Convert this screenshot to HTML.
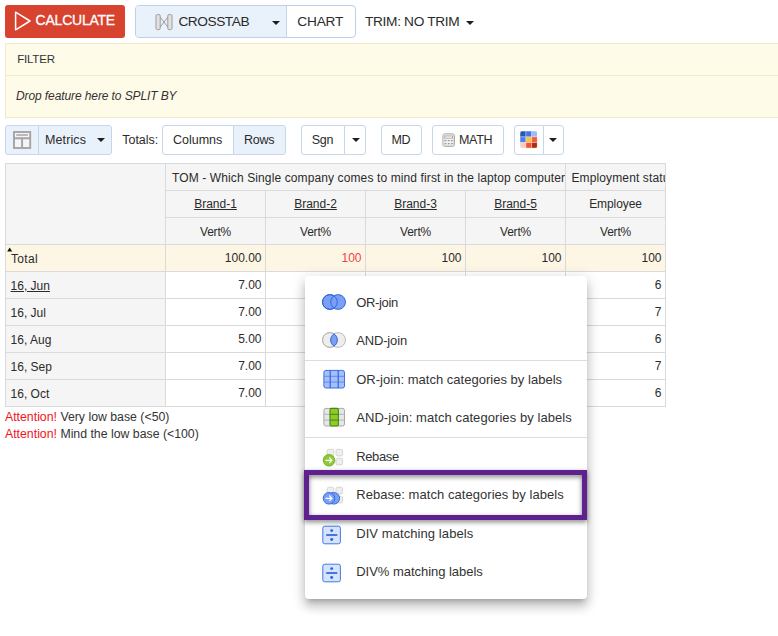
<!DOCTYPE html>
<html>
<head>
<meta charset="utf-8">
<title>Crosstab</title>
<style>
html,body{margin:0;padding:0;}
body{width:778px;height:636px;position:relative;overflow:hidden;background:#fff;font-family:"Liberation Sans",Arial,sans-serif;font-size:13px;color:#2b2b2b;}
.a{position:absolute;box-sizing:border-box;}
.t{position:absolute;white-space:nowrap;}
.caret{position:absolute;width:0;height:0;border-left:4px solid transparent;border-right:4px solid transparent;border-top:4px solid #1e1e1e;}
u{text-decoration:underline;text-underline-offset:1px;}
.tb{position:absolute;box-sizing:border-box;top:125px;height:30px;border:1px solid #c6d7ed;background:#fff;}
.on{background:#e9f1fb;}
.cell{position:absolute;box-sizing:border-box;}
svg{position:absolute;overflow:visible;}
</style>
</head>
<body>
<!-- top bar -->
<div class="a" style="left:5px;top:5px;width:120px;height:32.5px;background:#d7432e;border-radius:3px;"></div>
<svg style="left:0;top:0" width="40" height="40" viewBox="0 0 40 40"><path d="M15.6 12.2 L30 21 L15.6 29.8 Z" fill="none" stroke="#fff" stroke-width="1.5" stroke-linejoin="round"/></svg>
<div class="t" style="left:35.6px;top:10.1px;height:20px;line-height:20px;font-size:14px;letter-spacing:-0.23px;color:#fff;-webkit-text-stroke:0.3px #fff;">CALCULATE</div>
<div class="a" style="left:135px;top:5px;width:220.5px;height:32.5px;border:1px solid #bcd0ea;border-radius:4px;background:#fff;overflow:hidden;"><div class="a" style="left:0;top:0;width:151px;height:31px;background:#e9f1fb;border-right:1px solid #c6d7ed;"></div></div>
<svg style="left:155px;top:13px" width="18" height="18" viewBox="0 0 18 18"><rect x="1" y="1.6" width="4.2" height="15" rx="1.3" fill="#e2e2e2" stroke="#9c9c9c" stroke-width="1"/><rect x="12.8" y="1.6" width="4.2" height="15" rx="1.3" fill="#e2e2e2" stroke="#9c9c9c" stroke-width="1"/><path d="M5.2 4.2 L12.8 14 M12.8 4.2 L5.2 14" stroke="#9c9c9c" stroke-width="1" fill="none"/></svg>
<div class="t" style="left:178.4px;top:12.3px;height:20px;line-height:20px;font-size:13.7px;letter-spacing:-0.45px;">CROSSTAB</div>
<div class="caret" style="left:272px;top:21px"></div>
<div class="t" style="left:297.3px;top:12.3px;height:20px;line-height:20px;font-size:13.7px;letter-spacing:-0.2px;">CHART</div>
<div class="t" style="left:365px;top:12.3px;height:20px;line-height:20px;font-size:13.7px;letter-spacing:-0.33px;">TRIM: NO TRIM</div>
<div class="caret" style="left:466px;top:21px"></div>
<!-- filter panel -->
<div class="a" style="left:5px;top:43px;width:790px;height:75px;background:#fefbe9;border:1px solid #f2ebca;"><div class="a" style="left:0;right:0;top:31px;height:1px;background:#f2ebca;"></div></div>
<div class="t" style="left:17.2px;top:49.4px;height:20px;line-height:20px;font-size:11.5px;letter-spacing:-0.2px;color:#333;">FILTER</div>
<div class="t" style="left:16px;top:86.2px;height:20px;line-height:20px;font-size:12px;letter-spacing:-0.1px;color:#333;font-style:italic;">Drop feature here to SPLIT BY</div>
<!-- toolbar -->
<div class="tb on" style="left:5px;width:34px;border-radius:3px 0 0 3px;"></div>
<div class="tb on" style="left:38px;width:74px;border-radius:0 3px 3px 0;"></div>
<svg style="left:12px;top:130px" width="20" height="20" viewBox="0 0 20 20"><rect x="2" y="2" width="16.2" height="16" fill="#f2f5f9" stroke="#a6a4a1" stroke-width="1.9"/><path d="M2 8.2 H18.2 M10.1 8.2 V18" stroke="#a6a4a1" stroke-width="1.9" fill="none"/><path d="M4.3 5 H15.9" stroke="#a6a4a1" stroke-width="1.5" fill="none"/></svg>
<div class="t" style="left:45px;top:129.6px;height:20px;line-height:20px;font-size:12.5px;letter-spacing:0.1px;">Metrics</div>
<div class="caret" style="left:97px;top:137.7px"></div>
<div class="t" style="left:122.2px;top:129.6px;height:20px;line-height:20px;font-size:12.5px;">Totals:</div>
<div class="tb" style="left:162px;width:72px;border-radius:3px 0 0 3px;"></div>
<div class="tb on" style="left:233px;width:53px;border-radius:0 3px 3px 0;"></div>
<div class="t" style="left:173px;top:129.6px;height:20px;line-height:20px;font-size:12.5px;">Columns</div>
<div class="t" style="left:244px;top:129.6px;height:20px;line-height:20px;font-size:12.5px;letter-spacing:-0.25px;">Rows</div>
<div class="tb" style="left:301px;width:44px;border-radius:3px 0 0 3px;"></div>
<div class="tb" style="left:344px;width:22px;border-radius:0 3px 3px 0;"></div>
<div class="t" style="left:311.8px;top:129.6px;height:20px;line-height:20px;font-size:12.5px;letter-spacing:-0.3px;">Sgn</div>
<div class="caret" style="left:352px;top:137.7px"></div>
<div class="tb" style="left:381px;width:41px;border-radius:3px;"></div>
<div class="t" style="left:391.6px;top:129.6px;height:20px;line-height:20px;font-size:12.5px;letter-spacing:-0.4px;">MD</div>
<div class="tb" style="left:432px;width:72px;border-radius:3px;"></div>
<svg style="left:442px;top:133.4px" width="14" height="15" viewBox="0 0 14 15"><rect x="0.9" y="0.8" width="11.6" height="12.6" rx="1.8" fill="#f3f3f3" stroke="#a6a6a6" stroke-width="0.9"/><rect x="1.9" y="1.8" width="9.6" height="10.6" rx="1" fill="none" stroke="#d0d0d0" stroke-width="0.7"/><rect x="2.8" y="3" width="7.8" height="2.2" fill="#fbfbfb" stroke="#a0a0a0" stroke-width="0.8"/><path d="M2.6 7.7 H4.5 M5.8 7.7 H7.6 M8.9 7.7 H10.8 M2.6 10.6 H4.5 M5.8 10.6 H7.6 M8.9 10.6 H10.8" stroke="#9a9a9a" stroke-width="1.2"/></svg>
<div class="t" style="left:459px;top:129.6px;height:20px;line-height:20px;font-size:12.5px;letter-spacing:-0.3px;">MATH</div>
<div class="tb" style="left:514px;width:30px;border-radius:3px 0 0 3px;"></div>
<div class="tb" style="left:543px;width:21px;border-radius:0 3px 3px 0;"></div>
<svg style="left:520.4px;top:131.3px" width="18" height="18" viewBox="0 0 18 18"><defs><clipPath id="cg"><rect x="0" y="0" width="17.4" height="17.2" rx="2.4"/></clipPath></defs><g clip-path="url(#cg)"><rect x="0.0" y="0.00" width="5.85" height="5.8" fill="#2458b4" opacity="0.5"/><rect x="5.8" y="0.00" width="5.85" height="5.8" fill="#4274e4" opacity="0.5"/><rect x="11.6" y="0.00" width="5.85" height="5.8" fill="#9cbcf8" opacity="0.5"/><rect x="0.0" y="5.73" width="5.85" height="5.8" fill="#4a80ec" opacity="0.5"/><rect x="5.8" y="5.73" width="5.85" height="5.8" fill="#f8c040" opacity="0.5"/><rect x="11.6" y="5.73" width="5.85" height="5.8" fill="#f45c40" opacity="0.5"/><rect x="0.0" y="11.46" width="5.85" height="5.8" fill="#fccac0" opacity="0.5"/><rect x="5.8" y="11.46" width="5.85" height="5.8" fill="#f05434" opacity="0.5"/><rect x="11.6" y="11.46" width="5.85" height="5.8" fill="#b02c10" opacity="0.5"/><rect x="0.5" y="0.50" width="4.8" height="4.75" fill="#2458b4"/><rect x="6.3" y="0.50" width="4.8" height="4.75" fill="#4274e4"/><rect x="12.1" y="0.50" width="4.8" height="4.75" fill="#9cbcf8"/><rect x="0.5" y="6.23" width="4.8" height="4.75" fill="#4a80ec"/><rect x="6.3" y="6.23" width="4.8" height="4.75" fill="#f8c040"/><rect x="12.1" y="6.23" width="4.8" height="4.75" fill="#f45c40"/><rect x="0.5" y="11.96" width="4.8" height="4.75" fill="#fccac0"/><rect x="6.3" y="11.96" width="4.8" height="4.75" fill="#f05434"/><rect x="12.1" y="11.96" width="4.8" height="4.75" fill="#b02c10"/></g></svg>
<div class="caret" style="left:549px;top:137.7px"></div>
<!-- table -->
<div class="a" style="left:5px;top:163px;width:661px;height:244px;background:#dadada;"></div>
<div class="cell" style="left:6px;top:164px;width:159px;height:80px;background:#f5f5f5;"></div>
<div class="cell" style="left:166px;top:164px;width:399px;height:26px;background:#f5f5f5;overflow:hidden;"><div class="t" style="left:6px;top:3.5px;height:20px;line-height:20px;font-size:12px;letter-spacing:0.115px;">TOM - Which Single company comes to mind first in the laptop computer screen</div>
</div>
<div class="cell" style="left:566px;top:164px;width:99px;height:26px;background:#f5f5f5;overflow:hidden;"><div class="t" style="left:5.5px;top:3.5px;height:20px;line-height:20px;font-size:12px;letter-spacing:0.12px;">Employment status</div>
</div>
<div class="cell" style="left:166px;top:191px;width:99px;height:26px;background:#f5f5f5;"></div>
<div class="t" style="left:166px;top:193.7px;height:20px;line-height:20px;font-size:12px;width:99px;text-align:center;"><u>Brand-1</u></div>
<div class="cell" style="left:166px;top:218px;width:99px;height:26px;background:#f5f5f5;"></div>
<div class="t" style="left:166px;top:222.4px;height:20px;line-height:20px;font-size:12px;letter-spacing:-0.2px;width:99px;text-align:center;">Vert%</div>
<div class="cell" style="left:266px;top:191px;width:99px;height:26px;background:#f5f5f5;"></div>
<div class="t" style="left:266px;top:193.7px;height:20px;line-height:20px;font-size:12px;width:99px;text-align:center;"><u>Brand-2</u></div>
<div class="cell" style="left:266px;top:218px;width:99px;height:26px;background:#f5f5f5;"></div>
<div class="t" style="left:266px;top:222.4px;height:20px;line-height:20px;font-size:12px;letter-spacing:-0.2px;width:99px;text-align:center;">Vert%</div>
<div class="cell" style="left:366px;top:191px;width:99px;height:26px;background:#f5f5f5;"></div>
<div class="t" style="left:366px;top:193.7px;height:20px;line-height:20px;font-size:12px;width:99px;text-align:center;"><u>Brand-3</u></div>
<div class="cell" style="left:366px;top:218px;width:99px;height:26px;background:#f5f5f5;"></div>
<div class="t" style="left:366px;top:222.4px;height:20px;line-height:20px;font-size:12px;letter-spacing:-0.2px;width:99px;text-align:center;">Vert%</div>
<div class="cell" style="left:466px;top:191px;width:99px;height:26px;background:#f5f5f5;"></div>
<div class="t" style="left:466px;top:193.7px;height:20px;line-height:20px;font-size:12px;width:99px;text-align:center;"><u>Brand-5</u></div>
<div class="cell" style="left:466px;top:218px;width:99px;height:26px;background:#f5f5f5;"></div>
<div class="t" style="left:466px;top:222.4px;height:20px;line-height:20px;font-size:12px;letter-spacing:-0.2px;width:99px;text-align:center;">Vert%</div>
<div class="cell" style="left:566px;top:191px;width:99px;height:26px;background:#f5f5f5;"></div>
<div class="t" style="left:566px;top:193.7px;height:20px;line-height:20px;font-size:12px;letter-spacing:-0.1px;width:99px;text-align:center;">Employee</div>
<div class="cell" style="left:566px;top:218px;width:99px;height:26px;background:#f5f5f5;"></div>
<div class="t" style="left:566px;top:222.4px;height:20px;line-height:20px;font-size:12px;letter-spacing:-0.2px;width:99px;text-align:center;">Vert%</div>
<div class="cell" style="left:6px;top:245px;width:159px;height:26px;background:#fef6e5;"></div>
<svg style="left:7px;top:247px" width="6" height="5" viewBox="0 0 6 5"><path d="M0.2 4.6 L2.7 0.4 L5.2 4.6 Z" fill="#111"/></svg>
<div class="t" style="left:11px;top:249.3px;height:20px;line-height:20px;font-size:12px;letter-spacing:0.3px;">Total</div>
<div class="cell" style="left:166px;top:245px;width:99px;height:26px;background:#fef6e5;"></div>
<div class="t" style="left:166px;top:247.9px;height:20px;line-height:20px;font-size:12px;width:95.5px;text-align:right;">100.00</div>
<div class="cell" style="left:266px;top:245px;width:99px;height:26px;background:#fef6e5;"></div>
<div class="t" style="left:266px;top:247.9px;height:20px;line-height:20px;font-size:12px;color:#ee4444;width:95.5px;text-align:right;">100</div>
<div class="cell" style="left:366px;top:245px;width:99px;height:26px;background:#fef6e5;"></div>
<div class="t" style="left:366px;top:247.9px;height:20px;line-height:20px;font-size:12px;width:95.5px;text-align:right;">100</div>
<div class="cell" style="left:466px;top:245px;width:99px;height:26px;background:#fef6e5;"></div>
<div class="t" style="left:466px;top:247.9px;height:20px;line-height:20px;font-size:12px;width:95.5px;text-align:right;">100</div>
<div class="cell" style="left:566px;top:245px;width:99px;height:26px;background:#fef6e5;"></div>
<div class="t" style="left:566px;top:247.9px;height:20px;line-height:20px;font-size:12px;width:95.5px;text-align:right;">100</div>
<div class="cell" style="left:6px;top:272px;width:159px;height:26px;background:#f5f5f5;"></div>
<div class="t" style="left:10.6px;top:275.5px;height:20px;line-height:20px;font-size:12px;"><u>16, Jun</u></div>
<div class="cell" style="left:166px;top:272px;width:99px;height:26px;background:#fff;"></div>
<div class="cell" style="left:266px;top:272px;width:99px;height:26px;background:#fff;"></div>
<div class="cell" style="left:366px;top:272px;width:99px;height:26px;background:#fff;"></div>
<div class="cell" style="left:466px;top:272px;width:99px;height:26px;background:#fff;"></div>
<div class="cell" style="left:566px;top:272px;width:99px;height:26px;background:#fff;"></div>
<div class="t" style="left:166px;top:274.5px;height:20px;line-height:20px;font-size:12px;width:95.5px;text-align:right;">7.00</div>
<div class="t" style="left:566px;top:274.5px;height:20px;line-height:20px;font-size:12px;width:95.5px;text-align:right;">6</div>
<div class="cell" style="left:6px;top:299px;width:159px;height:26px;background:#f5f5f5;"></div>
<div class="t" style="left:10.6px;top:302.5px;height:20px;line-height:20px;font-size:12px;">16, Jul</div>
<div class="cell" style="left:166px;top:299px;width:99px;height:26px;background:#fff;"></div>
<div class="cell" style="left:266px;top:299px;width:99px;height:26px;background:#fff;"></div>
<div class="cell" style="left:366px;top:299px;width:99px;height:26px;background:#fff;"></div>
<div class="cell" style="left:466px;top:299px;width:99px;height:26px;background:#fff;"></div>
<div class="cell" style="left:566px;top:299px;width:99px;height:26px;background:#fff;"></div>
<div class="t" style="left:166px;top:301.5px;height:20px;line-height:20px;font-size:12px;width:95.5px;text-align:right;">7.00</div>
<div class="t" style="left:566px;top:301.5px;height:20px;line-height:20px;font-size:12px;width:95.5px;text-align:right;">7</div>
<div class="cell" style="left:6px;top:326px;width:159px;height:26px;background:#f5f5f5;"></div>
<div class="t" style="left:10.6px;top:329.5px;height:20px;line-height:20px;font-size:12px;">16, Aug</div>
<div class="cell" style="left:166px;top:326px;width:99px;height:26px;background:#fff;"></div>
<div class="cell" style="left:266px;top:326px;width:99px;height:26px;background:#fff;"></div>
<div class="cell" style="left:366px;top:326px;width:99px;height:26px;background:#fff;"></div>
<div class="cell" style="left:466px;top:326px;width:99px;height:26px;background:#fff;"></div>
<div class="cell" style="left:566px;top:326px;width:99px;height:26px;background:#fff;"></div>
<div class="t" style="left:166px;top:328.5px;height:20px;line-height:20px;font-size:12px;width:95.5px;text-align:right;">5.00</div>
<div class="t" style="left:566px;top:328.5px;height:20px;line-height:20px;font-size:12px;width:95.5px;text-align:right;">6</div>
<div class="cell" style="left:6px;top:353px;width:159px;height:26px;background:#f5f5f5;"></div>
<div class="t" style="left:10.6px;top:356.5px;height:20px;line-height:20px;font-size:12px;">16, Sep</div>
<div class="cell" style="left:166px;top:353px;width:99px;height:26px;background:#fff;"></div>
<div class="cell" style="left:266px;top:353px;width:99px;height:26px;background:#fff;"></div>
<div class="cell" style="left:366px;top:353px;width:99px;height:26px;background:#fff;"></div>
<div class="cell" style="left:466px;top:353px;width:99px;height:26px;background:#fff;"></div>
<div class="cell" style="left:566px;top:353px;width:99px;height:26px;background:#fff;"></div>
<div class="t" style="left:166px;top:355.5px;height:20px;line-height:20px;font-size:12px;width:95.5px;text-align:right;">7.00</div>
<div class="t" style="left:566px;top:355.5px;height:20px;line-height:20px;font-size:12px;width:95.5px;text-align:right;">7</div>
<div class="cell" style="left:6px;top:380px;width:159px;height:26px;background:#f5f5f5;"></div>
<div class="t" style="left:10.6px;top:383.5px;height:20px;line-height:20px;font-size:12px;">16, Oct</div>
<div class="cell" style="left:166px;top:380px;width:99px;height:26px;background:#fff;"></div>
<div class="cell" style="left:266px;top:380px;width:99px;height:26px;background:#fff;"></div>
<div class="cell" style="left:366px;top:380px;width:99px;height:26px;background:#fff;"></div>
<div class="cell" style="left:466px;top:380px;width:99px;height:26px;background:#fff;"></div>
<div class="cell" style="left:566px;top:380px;width:99px;height:26px;background:#fff;"></div>
<div class="t" style="left:166px;top:382.5px;height:20px;line-height:20px;font-size:12px;width:95.5px;text-align:right;">7.00</div>
<div class="t" style="left:566px;top:382.5px;height:20px;line-height:20px;font-size:12px;width:95.5px;text-align:right;">6</div>
<div class="t" style="left:5px;top:406.6px;height:20px;line-height:20px;font-size:12.3px;color:#333;"><span style="color:#f0141e">Attention!</span> Very low base (&lt;50)</div>
<div class="t" style="left:5px;top:423.8px;height:20px;line-height:20px;font-size:12.3px;color:#333;"><span style="color:#f0141e">Attention!</span> Mind the low base (&lt;100)</div>
<!-- menu -->
<div class="a" style="left:305px;top:276px;width:282px;height:322.5px;background:#fff;border-radius:4px;box-shadow:0 5px 5px -3px rgba(0,0,0,0.2),0 8px 10px 1px rgba(0,0,0,0.14),0 3px 14px 2px rgba(0,0,0,0.12);"></div>
<div class="a" style="left:305px;top:360px;width:282px;height:1px;background:#dddddd;"></div>
<div class="a" style="left:305px;top:436.6px;width:282px;height:1px;background:#dddddd;"></div>
<div class="t" style="left:356.2px;top:292.7px;height:20px;line-height:20px;font-size:13px;letter-spacing:-0.35px;color:#333;">OR-join</div>
<div class="t" style="left:356.2px;top:330.6px;height:20px;line-height:20px;font-size:13px;letter-spacing:-0.15px;color:#333;">AND-join</div>
<div class="t" style="left:356.2px;top:369.9px;height:20px;line-height:20px;font-size:13px;letter-spacing:0.02px;color:#333;">OR-join: match categories by labels</div>
<div class="t" style="left:356.2px;top:407.9px;height:20px;line-height:20px;font-size:13px;letter-spacing:0.07px;color:#333;">AND-join: match categories by labels</div>
<div class="t" style="left:356.2px;top:446.7px;height:20px;line-height:20px;font-size:13px;letter-spacing:-0.35px;color:#333;">Rebase</div>
<div class="t" style="left:356.2px;top:485.4px;height:20px;line-height:20px;font-size:13px;letter-spacing:0.05px;color:#333;">Rebase: match categories by labels</div>
<div class="t" style="left:356.2px;top:523.8px;height:20px;line-height:20px;font-size:13px;letter-spacing:0.08px;color:#333;">DIV matching labels</div>
<div class="t" style="left:356.2px;top:561.8px;height:20px;line-height:20px;font-size:13px;letter-spacing:-0.03px;color:#333;">DIV% matching labels</div>
<svg style="left:319px;top:290px" width="30" height="24" viewBox="0 0 30 24"><circle cx="10.9" cy="12" r="7.4" fill="#7aa0f6" stroke="#2d60d8" stroke-width="0.9"/><circle cx="19.1" cy="12" r="7.4" fill="#7aa0f6" stroke="#2d60d8" stroke-width="0.9"/><circle cx="10.9" cy="12" r="7.4" fill="none" stroke="#2d60d8" stroke-width="0.9"/></svg>
<svg style="left:319px;top:328px" width="30" height="24" viewBox="0 0 30 24"><circle cx="10.9" cy="12" r="7.4" fill="#eeeeee" stroke="#b4b4b4" stroke-width="0.9"/><circle cx="19.1" cy="12" r="7.4" fill="#eeeeee" stroke="#b4b4b4" stroke-width="0.9"/><circle cx="10.9" cy="12" r="7.4" fill="none" stroke="#b4b4b4" stroke-width="0.9"/><path d="M15 5.84 A7.4 7.4 0 0 1 15 18.16 A7.4 7.4 0 0 1 15 5.84 Z" fill="#7aa0f6" stroke="#2d60d8" stroke-width="0.9"/></svg>
<svg style="left:319px;top:367px" width="30" height="24" viewBox="0 0 30 24"><rect x="4.9" y="3.4" width="20.6" height="17.6" rx="2" fill="#a4c0fa" stroke="#3b6fe3" stroke-width="1"/><path d="M4.9 9.3 H25.5 M4.9 15.1 H25.5" stroke="#5f8bee" stroke-width="1" fill="none"/><path d="M11.2 3.4 V21 M19.2 3.4 V21" stroke="#3466dc" stroke-width="1.2" fill="none"/></svg>
<svg style="left:319px;top:405px" width="30" height="24" viewBox="0 0 30 24"><rect x="4.9" y="3.4" width="20.6" height="17.6" rx="2" fill="#e6e6e6" stroke="#a8a8a8" stroke-width="1"/><path d="M4.9 9.3 H25.5 M4.9 15.1 H25.5" stroke="#b4b4b4" stroke-width="1" fill="none"/><rect x="11" y="3.4" width="8.4" height="17.6" rx="1.6" fill="#94c826" stroke="#3c8c14" stroke-width="1.1"/><path d="M11 9.3 H19.4 M11 15.1 H19.4" stroke="#3c8c14" stroke-width="1"/></svg>
<svg style="left:319px;top:448.1px" width="30" height="24" viewBox="0 0 30 24"><rect x="8.2" y="1.3" width="6.6" height="6.6" rx="1.5" fill="#eeeeee" stroke="#d2d2d2" stroke-width="0.9"/><rect x="17" y="1.3" width="6.6" height="6.6" rx="1.5" fill="#eeeeee" stroke="#d2d2d2" stroke-width="0.9"/><rect x="17" y="10.3" width="6.6" height="6.6" rx="1.5" fill="#eeeeee" stroke="#d2d2d2" stroke-width="0.9"/><circle cx="10" cy="12.3" r="5.8" fill="#8fc93a" stroke="#6fae1e" stroke-width="0.9"/><path d="M7 12.3 H12.6 M10.6 9.9 L13 12.3 L10.6 14.7" stroke="#fff" stroke-width="1.2" fill="none" stroke-linecap="round" stroke-linejoin="round"/></svg>
<svg style="left:319px;top:486.2px" width="30" height="24" viewBox="0 0 30 24"><rect x="8.2" y="1.3" width="6.6" height="6.6" rx="1.5" fill="#eeeeee" stroke="#d2d2d2" stroke-width="0.9"/><rect x="17" y="1.3" width="6.6" height="6.6" rx="1.5" fill="#eeeeee" stroke="#d2d2d2" stroke-width="0.9"/><rect x="17" y="10.3" width="6.6" height="6.6" rx="1.5" fill="#eeeeee" stroke="#d2d2d2" stroke-width="0.9"/><circle cx="14.8" cy="12.3" r="5.8" fill="#7aa0f6" stroke="#2d60d8" stroke-width="0.9"/><circle cx="10" cy="12.3" r="5.8" fill="#7aa0f6" stroke="#2d60d8" stroke-width="0.9"/><path d="M7 12.3 H12.6 M10.6 9.9 L13 12.3 L10.6 14.7" stroke="#fff" stroke-width="1.2" fill="none" stroke-linecap="round" stroke-linejoin="round"/></svg>
<svg style="left:319px;top:522.7px" width="30" height="24" viewBox="0 0 30 24"><rect x="3.8" y="3.2" width="17.6" height="17.6" rx="2" fill="#d5e3fc" stroke="#3f7ae6" stroke-width="1"/><path d="M7.2 12 H18.3" stroke="#2d60d8" stroke-width="1.7"/><circle cx="12.7" cy="7.6" r="1.45" fill="#2d60d8"/><circle cx="12.7" cy="16.5" r="1.45" fill="#2d60d8"/></svg>
<svg style="left:319px;top:560.8px" width="30" height="24" viewBox="0 0 30 24"><rect x="3.8" y="3.2" width="17.6" height="17.6" rx="2" fill="#d5e3fc" stroke="#3f7ae6" stroke-width="1"/><path d="M7.2 12 H18.3" stroke="#2d60d8" stroke-width="1.7"/><circle cx="12.7" cy="7.6" r="1.45" fill="#2d60d8"/><circle cx="12.7" cy="16.5" r="1.45" fill="#2d60d8"/></svg>
<div class="a" style="left:304.3px;top:470px;width:282.7px;height:50px;border:5px solid #5f2090;filter:drop-shadow(0.5px 2.5px 2.5px rgba(0,0,0,0.5));"></div>
</body>
</html>
